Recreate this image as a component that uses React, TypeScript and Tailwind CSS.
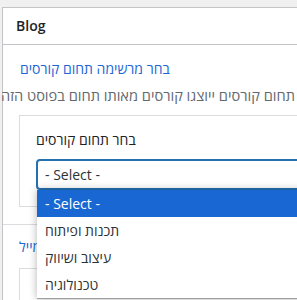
import React from "react";

export default function App() {
  return (
    <div
      className="relative w-[297px] h-[300px] overflow-hidden bg-[#f0f0f1]"
      style={{ fontFamily: '"Open Sans", "DejaVu Sans", sans-serif' }}
    >
      <div className="mt-[7px] ml-[2px] w-[420px] h-[300px] border-l border-t border-[#c3c4c7] bg-white">
        <div className="h-[37px] border-b border-[#c3c4c7] flex items-center pl-[13px] text-[14px] leading-[20px] font-semibold text-[#1d2327]">
          Blog
        </div>
        <div className="pt-[14px]">
          <div dir="rtl" className="w-fit ml-[17px] text-[14px] leading-[20px] text-[#2166d4]">
            בחר מרשימה תחום קורסים
          </div>
          <div dir="rtl" className="w-fit -ml-[2px] mt-[6px] whitespace-nowrap text-[14.6px] leading-[20px] text-[#646970]">
            לאחר בחירת תחום קורסים ייוצגו קורסים מאותו תחום בפוסט הזה
          </div>
          <div className="mt-[10px] ml-[16px] border border-[#dcdcde] pt-[14px] pb-[16px] pl-[16px]">
            <div dir="rtl" className="w-fit text-[14px] leading-[20px] text-[#1d2327]">
              בחר תחום קורסים
            </div>
            <div className="mt-[9px] h-[31px] w-[360px] rounded-[4px] border-2 border-[#2271b1] flex items-center pl-[7px] text-[14px] leading-[20px] text-[#2c3338]">
              - Select -
            </div>
          </div>
          <div className="mt-[17px] border-t border-[#dcdcde] pt-[12px]">
            <div dir="rtl" className="w-fit ml-[16px] text-[14px] leading-[20px] text-[#2166d4]">
              פרטי מייל
            </div>
            <div className="mt-[11px] ml-[16px] h-[60px] border border-[#dcdcde]" />
          </div>
        </div>
      </div>

      <div className="absolute left-[37px] top-[190px] w-[300px] bg-white border-b border-[#a0a0a0] shadow-[0_0_8px_rgba(0,0,0,0.3)] text-[14px] leading-[20px]">
        <div className="h-[27px] flex items-center pl-[8px] bg-[#1967d2] text-white">
          - Select -
        </div>
        <div className="h-[27px] flex items-center pl-[8px] text-[#2c3338]">
          <span dir="rtl">תכנות ופיתוח</span>
        </div>
        <div className="h-[27px] flex items-center pl-[8px] text-[#2c3338]">
          <span dir="rtl">עיצוב ושיווק</span>
        </div>
        <div className="h-[27px] flex items-center pl-[8px] text-[#2c3338]">
          <span dir="rtl">טכנולוגיה</span>
        </div>
      </div>
    </div>
  );
}
